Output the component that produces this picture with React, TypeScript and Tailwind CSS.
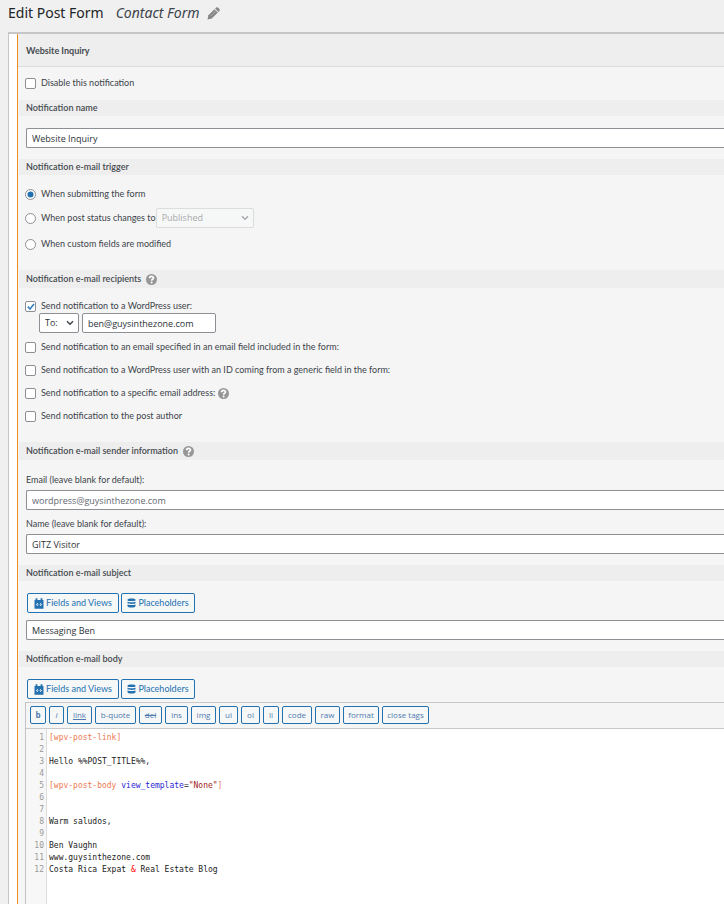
import { useState } from 'react';
import type { ReactNode } from 'react';

const quickTags = [
  { label: 'b', className: 'w-[16px] font-bold' },
  { label: 'i', className: 'w-[15px] italic' },
  { label: 'link', className: 'w-[25px] underline' },
  { label: 'b-quote', className: 'w-[41px]' },
  { label: 'del', className: 'w-[23px] line-through' },
  { label: 'ins', className: 'w-[23px]' },
  { label: 'img', className: 'w-[25px]' },
  { label: 'ul', className: 'w-[19px]' },
  { label: 'ol', className: 'w-[19px]' },
  { label: 'li', className: 'w-[16px]' },
  { label: 'code', className: 'w-[30px]' },
  { label: 'raw', className: 'w-[25px]' },
  { label: 'format', className: 'w-[36px]' },
  { label: 'close tags', className: 'w-[47px]' },
];

const bodyLines: ReactNode[] = [
  <span className="text-[#ee7b52]">[wpv-post-link]</span>,
  '',
  'Hello %%POST_TITLE%%,',
  '',
  <>
    <span className="text-[#ee7b52]">[wpv-post-body </span>
    <span className="text-[#2a1fd0]">view_template</span>=
    <span className="text-[#a02020]">"None"</span>
    <span className="text-[#ee7b52]">]</span>
  </>,
  '',
  '',
  'Warm saludos,',
  '',
  'Ben Vaughn',
  'www.guysinthezone.com',
  <>
    Costa Rica Expat <span className="text-[#f00]">&amp;</span> Real Estate Blog
  </>,
];

function SectionTitle({ children, help = false }: { children: ReactNode; help?: boolean }) {
  return (
    <h3
      className={`flex items-center gap-[5px] bg-[#eee] pl-[7px] font-semibold text-[#464b50] ${
        help ? 'h-[18px]' : 'h-4'
      }`}
    >
      {children}
      {help && <HelpButton />}
    </h3>
  );
}

function HelpButton() {
  return (
    <button type="button" aria-label="Help" className="size-[11px] shrink-0">
      <svg viewBox="0 0 11 11" className="size-[11px]">
        <circle cx="5.5" cy="5.5" r="5.5" fill="#969696" />
        <path
          d="M3.6 4.2C3.6 1.9 7.5 1.9 7.5 4.1C7.5 5.5 5.6 5.2 5.6 6.7"
          fill="none"
          stroke="#fff"
          strokeWidth="1.7"
        />
        <circle cx="5.6" cy="8.5" r="1" fill="#fff" />
      </svg>
    </button>
  );
}

function Choice({
  id,
  type = 'checkbox',
  name,
  checked = false,
  children,
}: {
  id: string;
  type?: 'checkbox' | 'radio';
  name?: string;
  checked?: boolean;
  children: ReactNode;
}) {
  return (
    <div className="flex h-3 items-center gap-[5px]">
      <span className="relative size-[11px] shrink-0">
        <input
          id={id}
          type={type}
          name={name}
          defaultChecked={checked}
          className={`peer block size-[11px] appearance-none border border-[#8c8f94] bg-white ${
            type === 'radio' ? 'rounded-full' : 'rounded-xs'
          }`}
        />
        <svg
          viewBox="0 0 11 11"
          className="pointer-events-none absolute inset-0 hidden size-[11px] peer-checked:block"
        >
          {type === 'radio' ? (
            <circle cx="5.5" cy="5.5" r="3" fill="#2271b1" />
          ) : (
            <path d="M2.8 5.6L5 8L9 3" fill="none" stroke="#3582c4" strokeWidth="1.7" />
          )}
        </svg>
      </span>
      <label htmlFor={id}>{children}</label>
    </div>
  );
}

function TextField({ label, ...rest }: { label: string; id?: string; value?: string; placeholder?: string }) {
  const { value, ...props } = rest;
  return (
    <div className="pl-[7px]">
      <input
        type="text"
        aria-label={label}
        defaultValue={value}
        {...props}
        className="block h-5 w-full rounded-l-xs border border-r-0 border-[#8c8f94] bg-white px-[5px] font-['Open_Sans','Noto_Sans',sans-serif] text-[9px] text-[#2c3338] placeholder:text-[#646970]"
      />
    </div>
  );
}

function Chevron({ className }: { className: string }) {
  return (
    <svg viewBox="0 0 8 6" className={`pointer-events-none absolute top-[7px] h-[6px] w-2 ${className}`}>
      <path d="M1 1.2L4 4.3L7 1.2" fill="none" stroke="currentColor" strokeWidth="1.4" />
    </svg>
  );
}

function InsertButtons() {
  const button =
    'flex h-5 items-center justify-center gap-[2px] rounded-xs border border-[#2271b1] bg-[#f6f7f7] text-[#2271b1]';
  return (
    <div className="flex gap-[2px] pl-2">
      <button type="button" className={`${button} w-[92px]`}>
        <svg viewBox="0 0 10 11" className="h-[11px] w-[10px]">
          <path d="M0.5 2H1.6V0.2H3.4V2H6.6V0.2H8.4V2H9.5V10.8H0.5Z" fill="currentColor" />
          <path
            d="M3.6 5L2 6.5L3.6 8L4.4 6.5ZM6.4 5L8 6.5L6.4 8L5.6 6.5Z"
            fill="#fff"
          />
          <path d="M3 6.5H3.8M6.2 6.5H7" stroke="currentColor" strokeWidth="0.7" />
        </svg>
        Fields and Views
      </button>
      <button type="button" className={`${button} w-[74px]`}>
        <svg viewBox="0 0 9 10" className="h-[10px] w-[9px]" fill="currentColor">
          <path d="M0.5 1.5C0.5 0 8.5 0 8.5 1.5V2.2C8.5 3.4 0.5 3.4 0.5 2.2Z" />
          <path d="M0.5 3.7Q4.5 4.8 8.5 3.7V5C8.5 6.2 0.5 6.2 0.5 5Z" />
          <path d="M0.5 6.5Q4.5 7.6 8.5 6.5V8.2C8.5 9.9 0.5 9.9 0.5 8.2Z" />
        </svg>
        Placeholders
      </button>
    </div>
  );
}

export default function App() {
  const [recipient, setRecipient] = useState('ben@guysinthezone.com');

  return (
    <div className="flex min-h-screen flex-col overflow-hidden bg-[#f0f0f0] pl-2 font-['Lato','Open_Sans',sans-serif] text-[9px] leading-3 text-[#3c434a]">
      <header className="flex h-8 items-start gap-3 pt-[3px] font-['Noto_Sans','Open_Sans',sans-serif] leading-5">
        <h1 className="text-[14px] text-[#1d2327]">Edit Post Form</h1>
        <div className="flex items-center gap-2">
          <em className="text-[14px] text-[#3c434a]">Contact Form</em>
          <button type="button" aria-label="Edit title">
            <svg viewBox="0 0 13 13" className="size-[13px]" fill="#868686">
              <path d="M0.5 12.5L1.4 8.2L7.4 2.2L10.8 5.6L4.8 11.6Z" />
              <path d="M8.1 1.5L9.2 0.5Q10.1 -0.1 11 0.6L12.4 2Q13.1 2.9 12.5 3.8L11.5 4.9Z" />
              <path d="M3.6 9L8.6 4" stroke="#c8c8c8" strokeWidth="0.6" />
            </svg>
          </button>
        </div>
      </header>

      <main className="flex grow border-t-2 border-l border-[#c6c6c6] bg-white pl-2">
        <div className="flex min-w-0 grow flex-col border-l border-[#ef8e1e] bg-[#f5f5f5]">
          <h2 className="flex h-[33px] items-center border-b border-[#dcdcdc] bg-[#eee] pt-px pl-2 font-bold text-[#464b50]">
            Website Inquiry
          </h2>

          <form className="flex grow flex-col pl-px">
            <div className="py-[10px] pl-[6px]">
              <Choice id="disable">Disable this notification</Choice>
            </div>

            <div className="mt-px">
              <SectionTitle>Notification name</SectionTitle>
            </div>
            <div className="pt-3 pb-[11px]">
              <TextField label="Notification name" value="Website Inquiry" />
            </div>

            <SectionTitle>Notification e-mail trigger</SectionTitle>
            <div className="flex flex-col pt-[13px] pb-5 pl-[6px]">
              <Choice id="on-submit" type="radio" name="trigger" checked>
                When submitting the form
              </Choice>
              <div className="mt-2 flex h-5 items-center">
                <Choice id="on-status" type="radio" name="trigger">
                  When post status changes to
                </Choice>
                <span className="relative text-[#a7aaad]">
                  <select
                    disabled
                    aria-label="Post status"
                    className="block h-5 w-[98px] appearance-none rounded-xs border border-[#dcdcde] bg-[#f6f7f7] pl-[5px] font-['Open_Sans','Noto_Sans',sans-serif] text-[9px]"
                  >
                    <option>Published</option>
                  </select>
                  <Chevron className="right-[5px]" />
                </span>
              </div>
              <div className="mt-[10px]">
                <Choice id="on-modified" type="radio" name="trigger">
                  When custom fields are modified
                </Choice>
              </div>
            </div>

            <SectionTitle help>Notification e-mail recipients</SectionTitle>
            <div className="flex flex-col pt-3 pb-5 pl-[6px]">
              <Choice id="to-user" checked>
                Send notification to a WordPress user:
              </Choice>
              <div className="mt-px mb-2 flex gap-[3px] pl-[14px]">
                <span className="relative">
                  <select
                    aria-label="Recipient type"
                    className="block h-5 w-10 appearance-none rounded-xs border border-[#8c8f94] bg-white pl-[5px] font-['Open_Sans','Noto_Sans',sans-serif] text-[9px] text-[#2c3338]"
                  >
                    <option>To:</option>
                    <option>Cc:</option>
                    <option>Bcc:</option>
                  </select>
                  <Chevron className="right-[5px]" />
                </span>
                <input
                  type="text"
                  aria-label="WordPress user"
                  value={recipient}
                  onChange={(e) => setRecipient(e.target.value)}
                  className="h-5 w-[134px] rounded-xs border border-[#8c8f94] bg-white px-[5px] font-['Open_Sans','Noto_Sans',sans-serif] text-[9px] text-[#2c3338]"
                />
              </div>
              <div className="flex flex-col gap-[11px]">
                <Choice id="to-email-field">
                  Send notification to an email specified in an email field included in the form:
                </Choice>
                <Choice id="to-generic-field">
                  Send notification to a WordPress user with an ID coming from a generic field in the form:
                </Choice>
                <div className="flex items-center gap-[3px]">
                  <Choice id="to-address">Send notification to a specific email address:</Choice>
                  <HelpButton />
                </div>
                <Choice id="to-author">Send notification to the post author</Choice>
              </div>
            </div>

            <SectionTitle help>Notification e-mail sender information</SectionTitle>
            <div className="flex flex-col pt-[14px] pb-[11px]">
              <label htmlFor="sender-email" className="mb-1 pl-[7px]">
                Email (leave blank for default):
              </label>
              <TextField id="sender-email" label="Email" placeholder="wordpress@guysinthezone.com" />
              <label htmlFor="sender-name" className="mt-2 mb-1 pl-[7px]">
                Name (leave blank for default):
              </label>
              <TextField id="sender-name" label="Name" value="GITZ Visitor" />
            </div>

            <SectionTitle>Notification e-mail subject</SectionTitle>
            <div className="flex flex-col gap-[7px] pt-3 pb-[11px]">
              <InsertButtons />
              <TextField label="Subject" value="Messaging Ben" />
            </div>

            <SectionTitle>Notification e-mail body</SectionTitle>
            <div className="pt-3 pb-[3px]">
              <InsertButtons />
            </div>

            <div className="ml-[6px] flex grow flex-col border-l border-[#c3c4c7] bg-white">
              <div className="flex h-[27px] items-start gap-[3px] border-y border-[#c9c9c9] bg-[#f5f5f5] pt-[3px] pl-1 font-['Open_Sans','Noto_Sans',sans-serif]">
                {quickTags.map((tag) => (
                  <button
                    key={tag.label}
                    type="button"
                    className={`flex h-[18px] shrink-0 items-center justify-center rounded-xs border border-[#2271b1] bg-[#f6f7f7] text-[8px] text-[#4f7cb0] ${tag.className}`}
                  >
                    {tag.label}
                  </button>
                ))}
              </div>
              <div className="flex grow font-['DejaVu_Sans_Mono',monospace] text-[8px]">
                <div className="w-[21px] border-r border-[#ddd] bg-[#f7f7f7] pt-[3px] pr-[2px] text-right text-[#999]">
                  {bodyLines.map((_, i) => (
                    <div key={i}>{i + 1}</div>
                  ))}
                </div>
                <div
                  role="textbox"
                  aria-multiline="true"
                  aria-label="Notification e-mail body"
                  contentEditable
                  suppressContentEditableWarning
                  spellCheck={false}
                  className="grow pt-[3px] pl-[2px] text-[#222]"
                >
                  {bodyLines.map((line, i) => (
                    <div key={i} className="h-3 whitespace-pre">
                      {line}
                    </div>
                  ))}
                </div>
              </div>
            </div>
          </form>
        </div>
      </main>
    </div>
  );
}
